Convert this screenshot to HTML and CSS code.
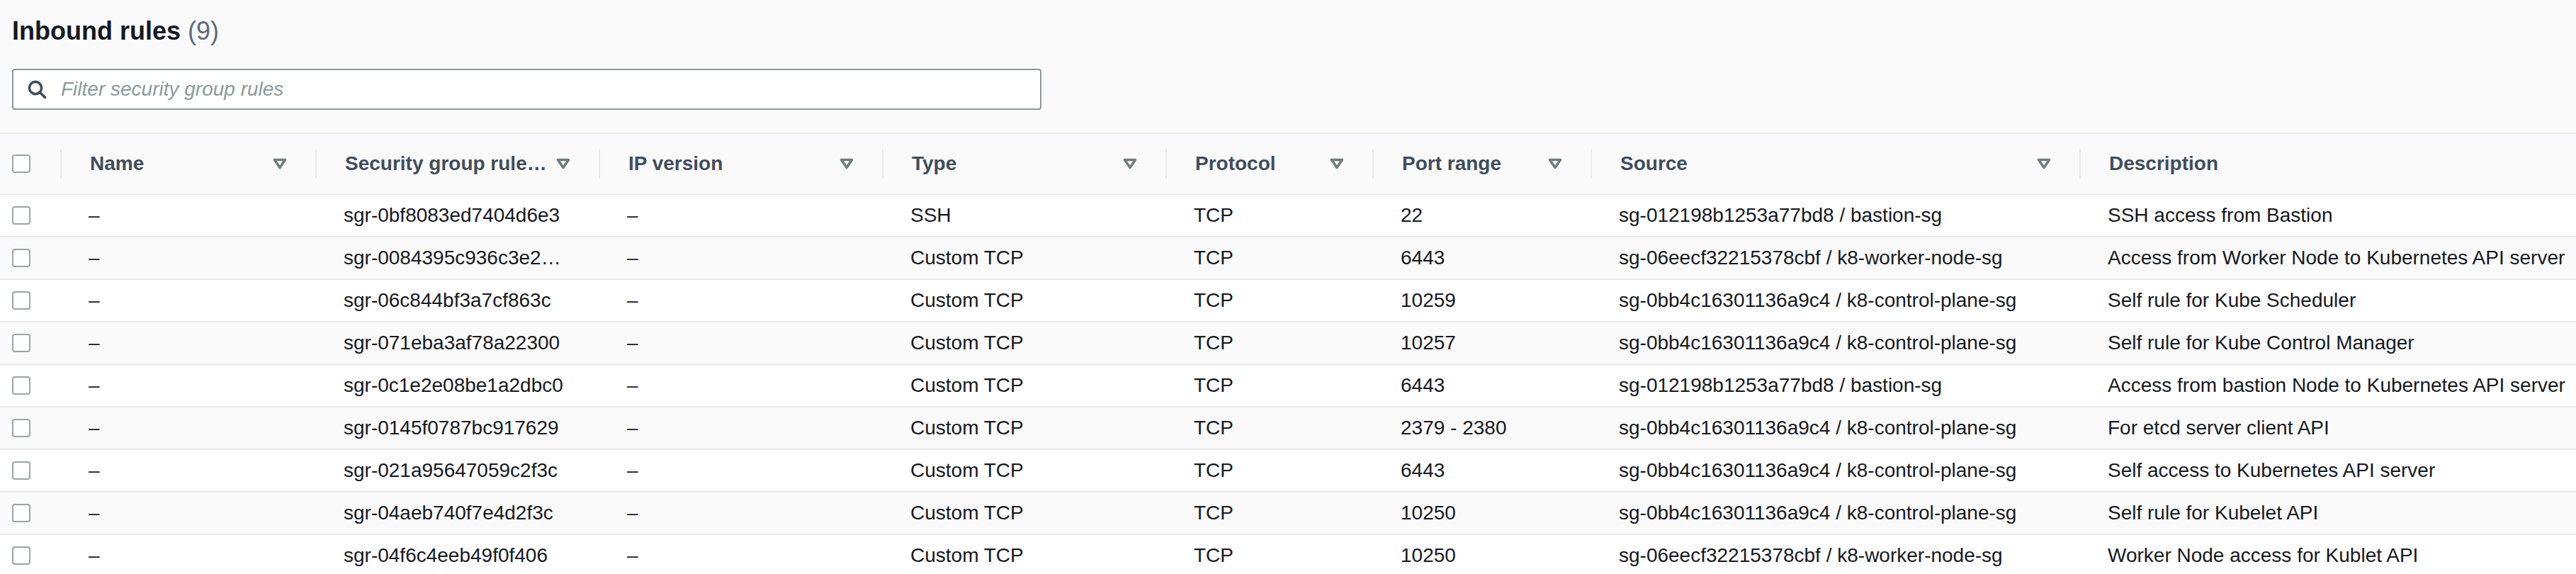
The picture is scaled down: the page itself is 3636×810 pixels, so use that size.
FILE: index.html
```html
<!DOCTYPE html>
<html lang="en">
<head>
<meta charset="utf-8">
<title>Inbound rules</title>
<link rel="stylesheet" href="styles.css">
</head>
<body>
<div class="page">
  <h2 class="title">Inbound rules <span class="count">(9)</span></h2>
  <div class="filter-wrap">
    <div class="filter">
      <svg class="search-icon" viewBox="0 0 28 28" width="28" height="28" aria-hidden="true">
        <circle cx="12" cy="12" r="8.6" fill="none" stroke="currentColor" stroke-width="3.6"/>
        <line x1="18.5" y1="18.5" x2="25.5" y2="25.5" stroke="currentColor" stroke-width="3.8" stroke-linecap="round"/>
      </svg>
      <span class="placeholder">Filter security group rules</span>
    </div>
  </div>

  <div class="table">
    <div class="row head">
      <div class="cell check"><span class="checkbox"></span></div>
      <div class="cell"><div class="th"><span>Name</span><svg class="fi" viewBox="0 0 20 16"><polygon points="2.5,2.5 17.5,2.5 10,13.5"/></svg></div></div>
      <div class="cell"><div class="th"><span>Security group rule…</span><svg class="fi" viewBox="0 0 20 16"><polygon points="2.5,2.5 17.5,2.5 10,13.5"/></svg></div></div>
      <div class="cell"><div class="th"><span>IP version</span><svg class="fi" viewBox="0 0 20 16"><polygon points="2.5,2.5 17.5,2.5 10,13.5"/></svg></div></div>
      <div class="cell"><div class="th"><span>Type</span><svg class="fi" viewBox="0 0 20 16"><polygon points="2.5,2.5 17.5,2.5 10,13.5"/></svg></div></div>
      <div class="cell"><div class="th"><span>Protocol</span><svg class="fi" viewBox="0 0 20 16"><polygon points="2.5,2.5 17.5,2.5 10,13.5"/></svg></div></div>
      <div class="cell"><div class="th"><span>Port range</span><svg class="fi" viewBox="0 0 20 16"><polygon points="2.5,2.5 17.5,2.5 10,13.5"/></svg></div></div>
      <div class="cell"><div class="th"><span>Source</span><svg class="fi" viewBox="0 0 20 16"><polygon points="2.5,2.5 17.5,2.5 10,13.5"/></svg></div></div>
      <div class="cell"><div class="th"><span>Description</span></div></div>
    </div>

    <div class="row">
      <div class="cell check"><span class="checkbox"></span></div>
      <div class="cell td">–</div>
      <div class="cell td">sgr-0bf8083ed7404d6e3</div>
      <div class="cell td">–</div>
      <div class="cell td">SSH</div>
      <div class="cell td">TCP</div>
      <div class="cell td">22</div>
      <div class="cell td">sg-012198b1253a77bd8 / bastion-sg</div>
      <div class="cell td">SSH access from Bastion</div>
    </div>
    <div class="row">
      <div class="cell check"><span class="checkbox"></span></div>
      <div class="cell td">–</div>
      <div class="cell td">sgr-0084395c936c3e2…</div>
      <div class="cell td">–</div>
      <div class="cell td">Custom TCP</div>
      <div class="cell td">TCP</div>
      <div class="cell td">6443</div>
      <div class="cell td">sg-06eecf32215378cbf / k8-worker-node-sg</div>
      <div class="cell td">Access from Worker Node to Kubernetes API server</div>
    </div>
    <div class="row">
      <div class="cell check"><span class="checkbox"></span></div>
      <div class="cell td">–</div>
      <div class="cell td">sgr-06c844bf3a7cf863c</div>
      <div class="cell td">–</div>
      <div class="cell td">Custom TCP</div>
      <div class="cell td">TCP</div>
      <div class="cell td">10259</div>
      <div class="cell td">sg-0bb4c16301136a9c4 / k8-control-plane-sg</div>
      <div class="cell td">Self rule for Kube Scheduler</div>
    </div>
    <div class="row">
      <div class="cell check"><span class="checkbox"></span></div>
      <div class="cell td">–</div>
      <div class="cell td">sgr-071eba3af78a22300</div>
      <div class="cell td">–</div>
      <div class="cell td">Custom TCP</div>
      <div class="cell td">TCP</div>
      <div class="cell td">10257</div>
      <div class="cell td">sg-0bb4c16301136a9c4 / k8-control-plane-sg</div>
      <div class="cell td">Self rule for Kube Control Manager</div>
    </div>
    <div class="row">
      <div class="cell check"><span class="checkbox"></span></div>
      <div class="cell td">–</div>
      <div class="cell td">sgr-0c1e2e08be1a2dbc0</div>
      <div class="cell td">–</div>
      <div class="cell td">Custom TCP</div>
      <div class="cell td">TCP</div>
      <div class="cell td">6443</div>
      <div class="cell td">sg-012198b1253a77bd8 / bastion-sg</div>
      <div class="cell td">Access from bastion Node to Kubernetes API server</div>
    </div>
    <div class="row">
      <div class="cell check"><span class="checkbox"></span></div>
      <div class="cell td">–</div>
      <div class="cell td">sgr-0145f0787bc917629</div>
      <div class="cell td">–</div>
      <div class="cell td">Custom TCP</div>
      <div class="cell td">TCP</div>
      <div class="cell td">2379 - 2380</div>
      <div class="cell td">sg-0bb4c16301136a9c4 / k8-control-plane-sg</div>
      <div class="cell td">For etcd server client API</div>
    </div>
    <div class="row">
      <div class="cell check"><span class="checkbox"></span></div>
      <div class="cell td">–</div>
      <div class="cell td">sgr-021a95647059c2f3c</div>
      <div class="cell td">–</div>
      <div class="cell td">Custom TCP</div>
      <div class="cell td">TCP</div>
      <div class="cell td">6443</div>
      <div class="cell td">sg-0bb4c16301136a9c4 / k8-control-plane-sg</div>
      <div class="cell td">Self access to Kubernetes API server</div>
    </div>
    <div class="row">
      <div class="cell check"><span class="checkbox"></span></div>
      <div class="cell td">–</div>
      <div class="cell td">sgr-04aeb740f7e4d2f3c</div>
      <div class="cell td">–</div>
      <div class="cell td">Custom TCP</div>
      <div class="cell td">TCP</div>
      <div class="cell td">10250</div>
      <div class="cell td">sg-0bb4c16301136a9c4 / k8-control-plane-sg</div>
      <div class="cell td">Self rule for Kubelet API</div>
    </div>
    <div class="row">
      <div class="cell check"><span class="checkbox"></span></div>
      <div class="cell td">–</div>
      <div class="cell td">sgr-04f6c4eeb49f0f406</div>
      <div class="cell td">–</div>
      <div class="cell td">Custom TCP</div>
      <div class="cell td">TCP</div>
      <div class="cell td">10250</div>
      <div class="cell td">sg-06eecf32215378cbf / k8-worker-node-sg</div>
      <div class="cell td">Worker Node access for Kublet API</div>
    </div>
  </div>
</div>
</body>
</html>
```
FILE: styles.css
```css
html, body {
  margin: 0;
  padding: 0;
  background: #fafafa;
}

body {
  font-family: "Liberation Sans", Arial, sans-serif;
  font-size: 28px;
  color: #16191f;
  overflow: hidden;
}

.page {
  padding-top: 22px;
}

.title {
  margin: 0;
  padding: 0 17px;
  height: 44px;
  line-height: 44px;
  font-size: 36px;
  font-weight: 700;
  color: #16191f;
  white-space: nowrap;
}

.count {
  font-weight: 400;
  color: #5f6b7a;
}

.filter-wrap {
  padding: 31px 17px 32px;
}

.filter {
  box-sizing: border-box;
  width: 1453px;
  height: 58px;
  border: 2px solid #8d9899;
  border-radius: 4px;
  background: #ffffff;
  display: flex;
  align-items: center;
  padding-left: 19px;
  gap: 20px;
}

.search-icon {
  color: #414d5c;
  flex: none;
}

.placeholder {
  font-style: italic;
  color: #8d9a9b;
  font-size: 28px;
}

.table {
  width: 100%;
}

.row {
  display: grid;
  grid-template-columns: 85px 360px 400px 400px 400px 292px 308px 690px 1fr;
  height: 60px;
  box-sizing: border-box;
  border-bottom: 2px solid #e9ebed;
  background: #ffffff;
}

.row:nth-child(odd) {
  background: #fafafa;
}

.row.head {
  height: 88px;
  border-top: 2px solid #e9ebed;
  background: #fafafa;
}

.cell {
  display: flex;
  align-items: center;
  min-width: 0;
  white-space: nowrap;
  overflow: hidden;
}

.check {
  padding-left: 17px;
}

.checkbox {
  box-sizing: border-box;
  width: 26px;
  height: 26px;
  border: 2px solid #9ba6a6;
  border-radius: 4px;
  background: #ffffff;
}

.th {
  flex: 1;
  height: 42px;
  border-left: 2px solid #e9ebed;
  display: flex;
  align-items: center;
  justify-content: space-between;
  padding: 0 40px;
  font-weight: 700;
  color: #414d5c;
  min-width: 0;
}

.fi {
  width: 20px;
  height: 16px;
  flex: none;
  fill: none;
  stroke: #717d7e;
  stroke-width: 3.6;
  stroke-linejoin: round;
}

.td {
  padding-left: 40px;
  color: #16191f;
}
```
